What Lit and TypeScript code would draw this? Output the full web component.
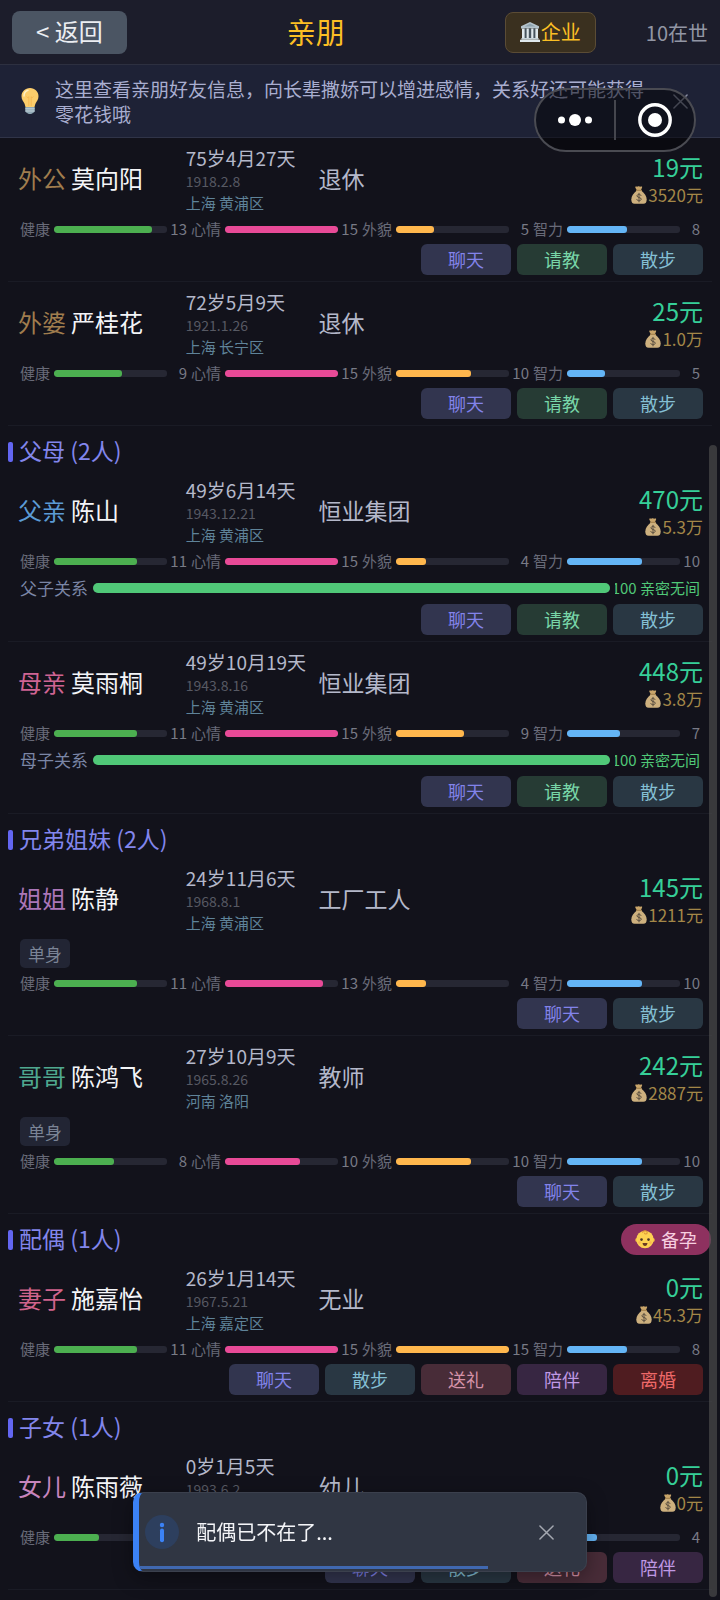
import { LitElement, html, css, svg, nothing } from "lit";
import { customElement, property, state } from "lit/decorators.js";
import { styleMap } from "lit/directives/style-map.js";

type Action = "chat" | "ask" | "walk" | "gift" | "stay" | "divorce";

interface Person {
  relation: string;
  tone: string;
  name: string;
  age: string;
  birth: string;
  place: string;
  job: string;
  income: string;
  wealth: string;
  stats: [number, number, number, number];
  bond?: { label: string; value: number; text: string };
  tag?: string;
  actions: Action[];
}

interface Group {
  title?: string;
  planBaby?: boolean;
  people: Person[];
}

const ACTION_TEXT: Record<Action, string> = {
  chat: "聊天",
  ask: "请教",
  walk: "散步",
  gift: "送礼",
  stay: "陪伴",
  divorce: "离婚",
};

const STATS = [
  { label: "健康", kind: "health" },
  { label: "心情", kind: "mood" },
  { label: "外貌", kind: "looks" },
  { label: "智力", kind: "mind" },
];
const STAT_MAX = 15;

const GROUPS: Group[] = [
  {
    people: [
      { relation: "外公", tone: "elder", name: "莫向阳", age: "75岁4月27天", birth: "1918.2.8", place: "上海 黄浦区", job: "退休", income: "19元", wealth: "3520元", stats: [13, 15, 5, 8], actions: ["chat", "ask", "walk"] },
      { relation: "外婆", tone: "elder", name: "严桂花", age: "72岁5月9天", birth: "1921.1.26", place: "上海 长宁区", job: "退休", income: "25元", wealth: "1.0万", stats: [9, 15, 10, 5], actions: ["chat", "ask", "walk"] },
    ],
  },
  {
    title: "父母 (2人)",
    people: [
      { relation: "父亲", tone: "father", name: "陈山", age: "49岁6月14天", birth: "1943.12.21", place: "上海 黄浦区", job: "恒业集团", income: "470元", wealth: "5.3万", stats: [11, 15, 4, 10], bond: { label: "父子关系", value: 100, text: "亲密无间" }, actions: ["chat", "ask", "walk"] },
      { relation: "母亲", tone: "mother", name: "莫雨桐", age: "49岁10月19天", birth: "1943.8.16", place: "上海 黄浦区", job: "恒业集团", income: "448元", wealth: "3.8万", stats: [11, 15, 9, 7], bond: { label: "母子关系", value: 100, text: "亲密无间" }, actions: ["chat", "ask", "walk"] },
    ],
  },
  {
    title: "兄弟姐妹 (2人)",
    people: [
      { relation: "姐姐", tone: "sister", name: "陈静", age: "24岁11月6天", birth: "1968.8.1", place: "上海 黄浦区", job: "工厂工人", income: "145元", wealth: "1211元", stats: [11, 13, 4, 10], tag: "单身", actions: ["chat", "walk"] },
      { relation: "哥哥", tone: "brother", name: "陈鸿飞", age: "27岁10月9天", birth: "1965.8.26", place: "河南 洛阳", job: "教师", income: "242元", wealth: "2887元", stats: [8, 10, 10, 10], tag: "单身", actions: ["chat", "walk"] },
    ],
  },
  {
    title: "配偶 (1人)",
    planBaby: true,
    people: [
      { relation: "妻子", tone: "wife", name: "施嘉怡", age: "26岁1月14天", birth: "1967.5.21", place: "上海 嘉定区", job: "无业", income: "0元", wealth: "45.3万", stats: [11, 15, 15, 8], actions: ["chat", "walk", "gift", "stay", "divorce"] },
    ],
  },
  {
    title: "子女 (1人)",
    people: [
      { relation: "女儿", tone: "daughter", name: "陈雨薇", age: "0岁1月5天", birth: "1993.6.2", place: "上海 黄浦区", job: "幼儿", income: "0元", wealth: "0元", stats: [6, 15, 7, 4], actions: ["chat", "walk", "gift", "stay"] },
    ],
  },
];

const bagIcon = html`<svg class="bag" viewBox="0 0 16 18" aria-hidden="true">${svg`
  <path d="M4.600.6c.7-.5 1.300.3 2 0s1.300-.5 2 0 1.500-.3 2.300 0c.5.3.2.9 0 1.400L10 4H5.700L4.500 2c-.2-.5-.4-1 .1-1.400Z" fill="#c9a56a"/>
  <path d="M5.500 4.800h5c2.900 2.400 5.200 5.400 5.200 8.700 0 2.700-1 4.300-3.400 4.300H3.700C1.300 17.800.3 16.200.3 13.500c0-3.300 2.300-6.300 5.200-8.700Z" fill="#cdb07e"/>
  <rect x="5" y="3.700" width="6" height="1.400" rx=".7" fill="#a98752"/>
  <path d="M10 9.500c-.4-.8-1.100-1.100-2-1.100-1.200 0-2 .6-2 1.500 0 2.200 4.200 1 4.200 3.200 0 1-.9 1.600-2.200 1.600-1.100 0-1.900-.5-2.300-1.300M8 7.300v8.600" fill="none" stroke="#5a4f40" stroke-width="1" stroke-linecap="round"/>`}</svg>`;

const bankIcon = html`<svg class="bank" viewBox="0 0 20 20" aria-hidden="true">${svg`
  <path d="M10 0 19 4.200V6.500H1V4.200Z" fill="#b4c3cb"/>
  <path d="M10 1.600 15.500 4.600h-11Z" fill="#8fa3ad"/>
  <path d="M2 6.500h16v10H2Z" fill="#46535c"/>
  <path d="M2 6.500h2.600v10H2ZM6.600 6.500h2.200v10H6.600ZM11.200 6.500h2.200v10h-2.200ZM15.400 6.500H18v10h-2.600Z" fill="#dfe8ec"/>
  <path d="M1.400 16h17.200v1.700H1.400Z" fill="#c6d3d9"/>
  <path d="M0 17.700h20V20H0Z" fill="#dfe8ec"/>`}</svg>`;

const bulbIcon = html`<svg class="bulb" viewBox="0 0 18 26" aria-hidden="true">${svg`
  <path d="M9 0c5 0 8.500 3.700 8.500 8.300 0 3.200-1.700 5-2.800 7-.7 1.300-.8 2.700-1.200 3.700h-9c-.4-1-.5-2.400-1.200-3.700C2.200 13.300.5 11.500.5 8.300.5 3.700 4 0 9 0Z" fill="#fccd6b"/>
  <path d="M5.500 8.500c1 1.500 2 1.300 2.300 0M12.500 8.500c-1 1.500-2 1.300-2.300 0M7.800 9v9M10.200 9v9" fill="none" stroke="#f5b44c" stroke-width=".8"/>
  <path d="M3 8c0-3 1.800-5 4-5.700" fill="none" stroke="#fff1c4" stroke-width="1.500" stroke-linecap="round"/>
  <path d="M4.300 19h9.400v4c0 1.200-1.200 1.700-2 2-.4.600-1.300 1-2.700 1s-2.300-.4-2.700-1c-.8-.3-2-.8-2-2Z" fill="#8fa8b4"/>
  <path d="M4.300 20.800h9.400M4.300 23h9.400" stroke="#c9d8df" stroke-width=".9"/>`}</svg>`;

const babyIcon = html`<svg class="baby" viewBox="0 0 20 19" aria-hidden="true">${svg`
  <circle cx="2.200" cy="10" r="2" fill="#f4b63f"/><circle cx="17.800" cy="10" r="2" fill="#f4b63f"/>
  <circle cx="10" cy="9.500" r="8.700" fill="#fdd151"/>
  <path d="M7.700 2.500c.2-2 4.300-2.300 4.500 0 .1 1.700-2.500 2-2.700.6" fill="none" stroke="#e09a3a" stroke-width="1.100" stroke-linecap="round"/>
  <circle cx="6.500" cy="9.600" r="1.300" fill="#4a3524"/><circle cx="13.500" cy="9.600" r="1.300" fill="#4a3524"/>
  <path d="M7.500 13h5c-.2 1.900-1.200 3-2.500 3s-2.300-1.100-2.500-3Z" fill="#6b3b22"/>
  <circle cx="4.600" cy="12.600" r="1.300" fill="#f9a84b" opacity=".6"/><circle cx="15.400" cy="12.600" r="1.300" fill="#f9a84b" opacity=".6"/>`}</svg>`;

const crossIcon = html`<svg class="cross" viewBox="0 0 16 16" aria-hidden="true">${svg`
  <path d="M1 1 15 15M15 1 1 15" fill="none" stroke="currentColor" stroke-width="1.600" stroke-linecap="round"/>`}</svg>`;

@customElement("person-row")
class PersonRow extends LitElement {
  @property({ attribute: false }) person!: Person;

  static styles = css`
    :host {
      display: flex;
      flex-direction: column;
      gap: 5px;
      padding: 8px 9px 6px;
      border-bottom: 1px solid #1a1b25;
    }
    .info {
      display: grid;
      grid-template-columns: 24fr 19fr 55fr;
      align-items: center;
      padding-left: 1px;
    }
    .who {
      display: flex;
      gap: 5px;
      margin: 0;
      padding-bottom: 4px;
      font-size: 24px;
      font-weight: inherit;
      line-height: 30px;
      white-space: nowrap;
      color: #f4f5f8;
    }
    .elder { color: #a07d4e; }
    .father { color: #5b9bd5; }
    .mother { color: #cf6493; }
    .sister { color: #ab76b8; }
    .brother { color: #4fa890; }
    .wife { color: #d0648c; }
    .daughter { color: #c785bd; }
    .life {
      display: flex;
      flex-direction: column;
      white-space: nowrap;
    }
    .age { font-size: 19px; line-height: 24px; color: #b4b8ca; }
    .birth { font-size: 14px; line-height: 22px; color: #575963; }
    .place { font-size: 15px; line-height: 22px; color: #5f8399; }
    .work {
      display: flex;
      align-items: center;
      justify-content: space-between;
    }
    .job {
      padding-bottom: 4px;
      font-size: 23px;
      line-height: 30px;
      color: #b4b8ca;
    }
    .money {
      display: flex;
      flex-direction: column;
      align-items: flex-end;
    }
    .income { font-size: 24px; line-height: 29px; color: #36cf98; }
    .wealth {
      display: flex;
      align-items: center;
      gap: 1px;
      font-size: 17px;
      line-height: 28px;
      color: #a38748;
    }
    .bag { width: 16px; height: 18px; }
    .tag {
      align-self: flex-start;
      margin-left: 3px;
      padding: 0 8px;
      border-radius: 5px;
      background: #222534;
      color: #7b8496;
      font-size: 17px;
      line-height: 29px;
    }
    .stats {
      display: grid;
      grid-template-columns: repeat(4, 1fr);
      gap: 4px;
      margin: 0 3px;
    }
    .stat {
      display: grid;
      grid-template-columns: auto 1fr 20px;
      align-items: center;
      font-size: 15px;
      line-height: 20px;
      color: #686a78;
    }
    .track {
      height: 7px;
      margin-left: 4px;
      border-radius: 3px;
      background: #262733;
      overflow: hidden;
    }
    .fill { height: 100%; border-radius: 3px; }
    .health { background: #4caf50; }
    .mood { background: #e84a97; }
    .looks { background: #ffb74d; }
    .mind { background: #64b5f6; }
    .value { text-align: right; color: #787a86; }
    .bond {
      display: flex;
      align-items: center;
      gap: 5px;
      margin: 0 3px;
      line-height: 23px;
      white-space: nowrap;
    }
    .bond-label { font-size: 17px; color: #7b86a6; }
    .bond-track {
      flex: 1;
      height: 10px;
      border-radius: 5px;
      background: #262733;
    }
    .bond-fill { height: 100%; border-radius: 5px; background: #50c878; }
    .bond-text {
      display: flex;
      justify-content: flex-end;
      width: 85px;
      overflow: hidden;
      font-size: 15px;
      color: #50c878;
    }
    .actions {
      display: flex;
      justify-content: flex-end;
      gap: 6px;
    }
    .action {
      width: 90px;
      padding: 0 0 1px;
      border: 0;
      border-radius: 6px;
      font: inherit;
      font-size: 18px;
      line-height: 30px;
    }
    .chat { background: #32354f; color: #8283ea; }
    .ask { background: #263b34; color: #78d6a8; }
    .walk { background: #293743; color: #84bfd4; }
    .gift { background: #482c38; color: #d592a8; }
    .stay { background: #372642; color: #bf98e4; }
    .divorce { background: #4f1c20; color: #ee6868; }
  `;

  render() {
    const p = this.person;
    return html`
      <div class="info">
        <h3 class="who"><span class=${p.tone}>${p.relation}</span><span>${p.name}</span></h3>
        <div class="life">
          <span class="age">${p.age}</span>
          <span class="birth">${p.birth}</span>
          <span class="place">${p.place}</span>
        </div>
        <div class="work">
          <span class="job">${p.job}</span>
          <div class="money">
            <span class="income">${p.income}</span>
            <span class="wealth">${bagIcon}<span>${p.wealth}</span></span>
          </div>
        </div>
      </div>
      ${p.tag ? html`<span class="tag">${p.tag}</span>` : nothing}
      <div class="stats">
        ${STATS.map(
          (s, i) => html`<div class="stat">
            <span>${s.label}</span>
            <div class="track">
              <div class="fill ${s.kind}" style=${styleMap({ width: `${(p.stats[i] / STAT_MAX) * 100}%` })}></div>
            </div>
            <span class="value">${p.stats[i]}</span>
          </div>`
        )}
      </div>
      ${p.bond
        ? html`<div class="bond">
            <span class="bond-label">${p.bond.label}</span>
            <div class="bond-track">
              <div class="bond-fill" style=${styleMap({ width: `${p.bond.value}%` })}></div>
            </div>
            <span class="bond-text"><span>${p.bond.value} ${p.bond.text}</span></span>
          </div>`
        : nothing}
      <div class="actions">
        ${p.actions.map((a) => html`<button class="action ${a}" type="button">${ACTION_TEXT[a]}</button>`)}
      </div>
    `;
  }
}

@customElement("app-root")
class AppRoot extends LitElement {
  @state() private toastOpen = true;
  @state() private tipOpen = true;

  static styles = css`
    :host {
      display: flex;
      flex-direction: column;
      position: relative;
      min-height: 100vh;
      background: #12121b;
      color: #f4f5f8;
      font-family: "Noto Sans CJK SC", sans-serif;
      font-weight: 400;
    }
    .header {
      display: flex;
      align-items: center;
      justify-content: space-between;
      padding: 11px 12px 10px;
      border-bottom: 1px solid #2d3040;
      background: #1c1d2b;
    }
    .back {
      padding: 0 24px 3px;
      border: 0;
      border-radius: 8px;
      background: #4b5563;
      color: #eceef2;
      font: inherit;
      font-size: 24px;
      line-height: 40px;
    }
    .title {
      margin: 0;
      padding-bottom: 4px;
      font-size: 29px;
      font-weight: inherit;
      line-height: 38px;
      color: #fbbf24;
    }
    .side {
      display: flex;
      align-items: center;
      gap: 50px;
    }
    .company {
      display: flex;
      align-items: center;
      gap: 1px;
      padding: 0 14px 1px;
      border: 1px solid #5b4c35;
      border-radius: 8px;
      background: #3a301f;
      color: #fbbf24;
      font: inherit;
      font-size: 20px;
      line-height: 38px;
    }
    .bank { width: 20px; height: 20px; }
    .alive { padding-bottom: 1px; font-size: 20px; color: #9296a4; }
    .tip {
      display: flex;
      align-items: center;
      gap: 16px;
      padding: 11px 28px 11px 21px;
      border-bottom: 1px solid #303448;
      background: #1e2236;
    }
    .bulb { width: 18px; height: 26px; }
    .tip-text {
      flex: 1;
      margin: 0;
      font-size: 19px;
      line-height: 25px;
      color: #a9aed0;
    }
    .tip-close, .toast-close {
      display: flex;
      padding: 4px;
      border: 0;
      background: none;
      color: #8a8ea2;
    }
    .cross { width: 15px; height: 15px; }
    .capsule {
      position: absolute;
      top: 88px;
      right: 24px;
      box-sizing: border-box;
      display: flex;
      align-items: center;
      width: 162px;
      height: 64px;
      border: 2px solid #4a4b52;
      border-radius: 32px;
      background: rgba(4, 4, 8, 0.52);
    }
    .capsule-button {
      flex: 1;
      display: flex;
      justify-content: center;
      padding: 0;
      border: 0;
      background: none;
    }
    .capsule-line { width: 2px; height: 40px; background: #45464e; }
    .dots { width: 34px; height: 12px; }
    .ring { width: 34px; height: 34px; }
    .list {
      position: relative;
      flex: 1;
      padding: 0 8px;
    }
    .group-head {
      display: flex;
      align-items: center;
      gap: 6px;
      padding: 10px 1px 3px 0;
    }
    .mark { width: 5px; height: 20px; border-radius: 2px; background: #6366f1; }
    .group-title {
      flex: 1;
      margin: 0;
      padding-bottom: 2px;
      font-size: 23px;
      font-weight: inherit;
      line-height: 29px;
      color: #8286ec;
    }
    .plan {
      display: flex;
      align-items: center;
      gap: 6px;
      padding: 0 14px;
      border: 0;
      border-radius: 16px;
      background: #8e315f;
      color: #f7cfe0;
      font: inherit;
      font-size: 18px;
      line-height: 31px;
    }
    .baby { width: 20px; height: 19px; }
    .scrollbar {
      position: absolute;
      top: 21%;
      right: 3px;
      bottom: 3px;
      width: 8px;
      border-radius: 4px;
      background: rgba(84, 84, 84, 0.6);
    }
    .toast {
      position: fixed;
      left: 0;
      right: 0;
      bottom: 28px;
      box-sizing: border-box;
      display: flex;
      align-items: center;
      gap: 17px;
      width: 63%;
      height: 80px;
      margin: 0 auto;
      padding: 0 28px 0 6px;
      border: 1px solid #3b404d;
      border-left: 6px solid #3b82f6;
      border-radius: 10px;
      background: #303643;
      box-shadow: 0 6px 20px rgba(0, 0, 0, 0.35);
      overflow: hidden;
    }
    .info { width: 34px; height: 34px; }
    .toast-text { flex: 1; font-size: 20px; line-height: 30px; }
    .toast-close { color: #a4a8b0; }
    .progress {
      position: absolute;
      left: 0;
      bottom: 2px;
      height: 3px;
      background: #4068b0;
    }
  `;

  render() {
    return html`
      <header class="header">
        <button class="back" type="button">&lt; 返回</button>
        <h1 class="title">亲朋</h1>
        <div class="side">
          <button class="company" type="button">${bankIcon}<span>企业</span></button>
          <span class="alive">10在世</span>
        </div>
      </header>
      ${this.tipOpen
        ? html`<div class="tip">
            ${bulbIcon}
            <p class="tip-text">这里查看亲朋好友信息，向长辈撒娇可以增进感情，关系好还可能获得零花钱哦</p>
            <button class="tip-close" type="button" aria-label="关闭提示" @click=${() => (this.tipOpen = false)}>${crossIcon}</button>
          </div>`
        : nothing}
      <main class="list">
        ${GROUPS.map(
          (g) => html`<section>
            ${g.title
              ? html`<div class="group-head">
                  <span class="mark"></span>
                  <h2 class="group-title">${g.title}</h2>
                  ${g.planBaby ? html`<button class="plan" type="button">${babyIcon}<span>备孕</span></button>` : nothing}
                </div>`
              : nothing}
            ${g.people.map((p) => html`<person-row .person=${p}></person-row>`)}
          </section>`
        )}
        <div class="scrollbar"></div>
      </main>
      <div class="capsule">
        <button class="capsule-button" type="button" aria-label="更多">
          <svg class="dots" viewBox="0 0 34 12">${svg`<circle cx="3.500" cy="6" r="3.500" fill="#fff"/><circle cx="17" cy="6" r="6" fill="#fff"/><circle cx="30.500" cy="6" r="3.500" fill="#fff"/>`}</svg>
        </button>
        <span class="capsule-line"></span>
        <button class="capsule-button" type="button" aria-label="退出">
          <svg class="ring" viewBox="0 0 34 34">${svg`<circle cx="17" cy="17" r="15.200" fill="none" stroke="#fff" stroke-width="3.400"/><circle cx="17" cy="17" r="7" fill="#fff"/>`}</svg>
        </button>
      </div>
      ${this.toastOpen
        ? html`<div class="toast" role="status">
            <svg class="info" viewBox="0 0 34 34" aria-hidden="true">${svg`<circle cx="17" cy="17" r="17" fill="#2d3f5e"/><circle cx="17" cy="10" r="2.200" fill="#3b82f6"/><path d="M17 15.500v9.800" stroke="#3b82f6" stroke-width="4" stroke-linecap="round"/>`}</svg>
            <span class="toast-text">配偶已不在了...</span>
            <button class="toast-close" type="button" aria-label="关闭" @click=${() => (this.toastOpen = false)}>${crossIcon}</button>
            <div class="progress" style=${styleMap({ width: "78%" })}></div>
          </div>`
        : nothing}
    `;
  }
}
